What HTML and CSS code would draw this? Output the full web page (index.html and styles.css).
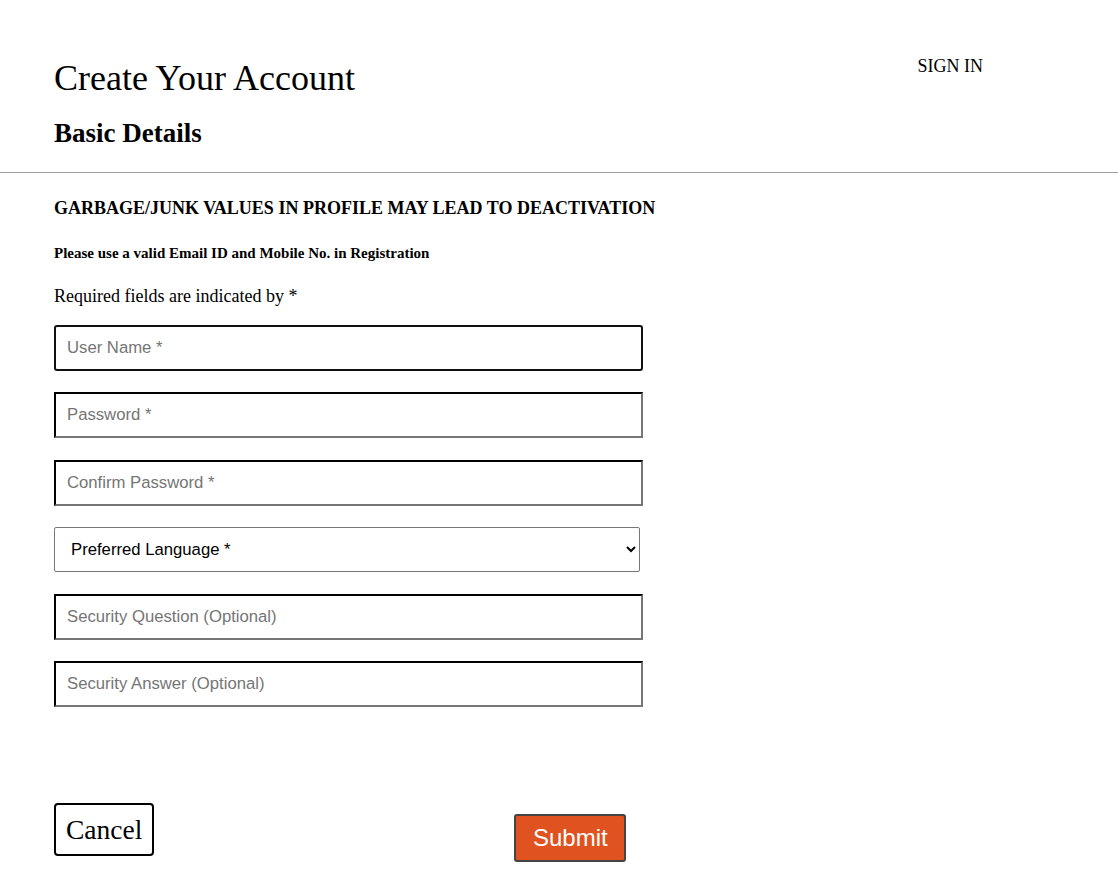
FILE: index.html
```html
<!DOCTYPE html>
<html lang="en">
<head>
<meta charset="utf-8">
<title>Create Your Account</title>
<link rel="stylesheet" href="styles.css">
</head>
<body>
<header class="top">
  <div class="titles">
    <h1 class="title">Create Your Account</h1>
    <h2 class="subtitle">Basic Details</h2>
  </div>
  <a class="signin" href="#">SIGN IN</a>
</header>
<hr class="divider">
<main class="content">
  <h3 class="warning">GARBAGE/JUNK VALUES IN PROFILE MAY LEAD TO DEACTIVATION</h3>
  <h5 class="note">Please use a valid Email ID and Mobile No. in Registration</h5>
  <p class="required">Required fields are indicated by *</p>
  <form class="form">
    <input class="field focused" type="text" placeholder="User Name *">
    <input class="field" type="password" placeholder="Password *">
    <input class="field" type="password" placeholder="Confirm Password *">
    <select class="field select">
      <option>Preferred Language *</option>
    </select>
    <input class="field" type="text" placeholder="Security Question (Optional)">
    <input class="field" type="text" placeholder="Security Answer (Optional)">
    <div class="actions">
      <button type="button" class="cancel">Cancel</button>
      <button type="submit" class="submit">Submit</button>
    </div>
  </form>
</main>
</body>
</html>
```
FILE: styles.css
```css
html, body {
  margin: 0;
  padding: 0;
  background: #fff;
  color: #000;
  font-family: "Liberation Serif", "Times New Roman", serif;
}

.top {
  display: flex;
  justify-content: space-between;
  align-items: flex-start;
  padding: 58px 135px 0 54px;
}

.title {
  margin: 0;
  font-size: 36px;
  font-weight: normal;
  line-height: 40px;
}

.subtitle {
  margin: 19px 0 0;
  font-size: 27px;
  font-weight: bold;
  line-height: 32px;
}

.signin {
  margin-top: -3px;
  font-size: 18px;
  color: #000;
  text-decoration: none;
  line-height: 22px;
}

.divider {
  margin: 23px 0 0;
  border: 0;
  height: 1px;
  background: #a0a0a0;
}

.content {
  padding: 0 54px;
}

.warning {
  margin: 24px 0 0;
  font-size: 18px;
  line-height: 22px;
  font-weight: bold;
}

.note {
  margin: 25px 0 0;
  font-size: 15px;
  line-height: 18px;
  font-weight: bold;
}

.required {
  margin: 23px 0 0;
  font-size: 18px;
  line-height: 22px;
}

.form {
  display: flex;
  flex-direction: column;
  align-items: flex-start;
  margin-top: 18px;
}

.field {
  box-sizing: border-box;
  width: 589px;
  height: 46px;
  margin: 0 0 21.4px;
  padding: 0 11px;
  border: 2px inset #767676;
  border-top-color: #1a1a1a;
  border-left-color: #1a1a1a;
  border-bottom-color: #767676;
  border-right-color: #767676;
  font-family: "Liberation Sans", Arial, sans-serif;
  font-size: 16.7px;
  color: #000;
  background: #fff;
}

.field::placeholder {
  color: #757575;
}

.field.focused {
  border: 2px solid #111;
  border-radius: 3px;
  outline: none;
}

.select {
  width: 586px;
  height: 45px;
  border: 1px solid #767676;
  border-radius: 2px;
  padding: 0 12px 0 12px;
  color: #000;
}

.actions {
  display: flex;
  align-items: flex-start;
  margin-top: 75px;
}

.cancel {
  box-sizing: border-box;
  height: 53px;
  padding: 0 10px;
  border: 2px solid #000;
  border-radius: 4px;
  background: #fff;
  color: #000;
  font-family: "Liberation Serif", "Times New Roman", serif;
  font-size: 27.5px;
}

.submit {
  box-sizing: border-box;
  width: 112px;
  height: 48px;
  margin: 11px 0 0 360px;
  padding: 0;
  border: 2px solid #444;
  border-radius: 3px;
  background: #e0521f;
  color: #fff;
  font-family: "Liberation Sans", Arial, sans-serif;
  font-size: 24px;
}
```
